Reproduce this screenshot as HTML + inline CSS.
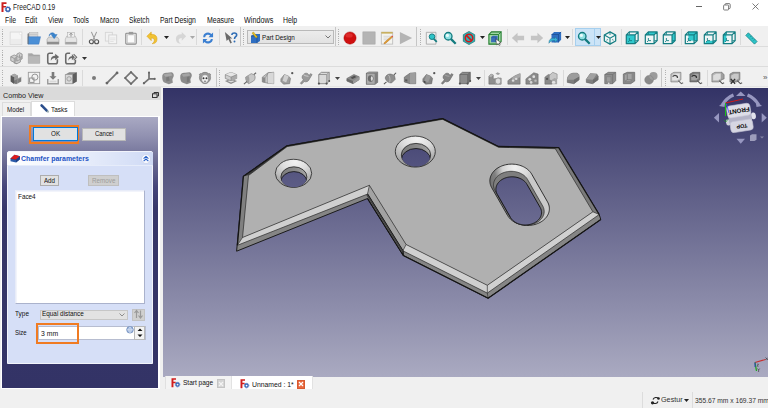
<!DOCTYPE html><html><head><meta charset="utf-8"><title>FreeCAD</title><style>
*{margin:0;padding:0;box-sizing:border-box}
html,body{width:768px;height:408px;overflow:hidden;background:#f0f0f0;font-family:"Liberation Sans",sans-serif;color:#000;position:relative}
.a{position:absolute}
.t{position:absolute;white-space:nowrap;transform-origin:0 0}
svg{overflow:visible}
</style></head><body>
<div class="a" style="left:0px;top:0px;width:768px;height:26px;background:#fff"></div>
<svg class="a" style="left:1px;top:2px" width="10" height="10" viewBox="0 0 10 10"><path d="M0.5 0.3h5v1.6h-3v2h2.6v1.6h-2.6v4.5h-2z" fill="#cc1f1f"/><circle cx="6.9" cy="7.3" r="1.9" fill="none" stroke="#3a62b0" stroke-width="1.4"/><circle cx="6.9" cy="7.3" r="2.7" fill="none" stroke="#3a62b0" stroke-width="0.9" stroke-dasharray="0.9 0.8"/></svg>
<div class="t" style="left:13.00px;top:2.64px;font-size:8.70px;line-height:8.70px;color:#222;font-weight:normal;transform:scaleX(0.759);">FreeCAD 0.19</div>
<div class="a" style="left:695.8px;top:5.8px;width:6.2px;height:0.9px;background:#666"></div>
<svg class="a" style="left:722.5px;top:3px" width="8" height="7.5" viewBox="0 0 8 7.5"><rect x="0.6" y="2" width="5" height="5" rx="0.8" fill="none" stroke="#666" stroke-width="0.85"/><path d="M2 2V1.6Q2 0.6 3 0.6H6.2Q7.2 0.6 7.2 1.6V4.8Q7.2 5.6 6.2 5.6H5.6" fill="none" stroke="#666" stroke-width="0.85"/></svg>
<svg class="a" style="left:751.5px;top:3px" width="7" height="7" viewBox="0 0 7 7"><path d="M0.5 0.5L6.5 6.5M6.5 0.5L0.5 6.5" stroke="#666" stroke-width="0.85"/></svg>
<div class="t" style="left:4.60px;top:15.88px;font-size:8.41px;line-height:8.41px;color:#111;font-weight:normal;transform:scaleX(0.813);">File</div>
<div class="t" style="left:25.40px;top:15.88px;font-size:8.41px;line-height:8.41px;color:#111;font-weight:normal;transform:scaleX(0.834);">Edit</div>
<div class="t" style="left:47.80px;top:15.88px;font-size:8.41px;line-height:8.41px;color:#111;font-weight:normal;transform:scaleX(0.841);">View</div>
<div class="t" style="left:73.20px;top:15.88px;font-size:8.41px;line-height:8.41px;color:#111;font-weight:normal;transform:scaleX(0.805);">Tools</div>
<div class="t" style="left:99.80px;top:15.88px;font-size:8.41px;line-height:8.41px;color:#111;font-weight:normal;transform:scaleX(0.813);">Macro</div>
<div class="t" style="left:129.40px;top:15.88px;font-size:8.41px;line-height:8.41px;color:#111;font-weight:normal;transform:scaleX(0.791);">Sketch</div>
<div class="t" style="left:160.10px;top:15.88px;font-size:8.41px;line-height:8.41px;color:#111;font-weight:normal;transform:scaleX(0.817);">Part Design</div>
<div class="t" style="left:206.60px;top:15.88px;font-size:8.41px;line-height:8.41px;color:#111;font-weight:normal;transform:scaleX(0.830);">Measure</div>
<div class="t" style="left:243.75px;top:15.88px;font-size:8.41px;line-height:8.41px;color:#111;font-weight:normal;transform:scaleX(0.858);">Windows</div>
<div class="t" style="left:282.80px;top:15.88px;font-size:8.41px;line-height:8.41px;color:#111;font-weight:normal;transform:scaleX(0.816);">Help</div>
<div class="a" style="left:0px;top:26px;width:768px;height:61px;background:#f0f0f0"></div>
<div class="a" style="left:0px;top:46px;width:768px;height:1px;background:#dcdcdc"></div>
<div class="a" style="left:0px;top:66px;width:768px;height:1px;background:#dcdcdc"></div>
<div class="a" style="left:0px;top:86px;width:768px;height:1px;background:#e4e4e4"></div>
<div class="a" style="left:2.3px;top:29px;width:1.2px;height:16px;background:repeating-linear-gradient(to bottom,#b2b2b2 0 1.1px,transparent 1.1px 2.2px)"></div>
<svg class="a" style="left:8.5px;top:30.5px" width="14" height="14" viewBox="0 0 16 16"><rect x="1.3" y="1.2" width="13.4" height="14.3" fill="#f5f5f5" stroke="#d2d2d2" stroke-width="0.8"/><rect x="2" y="9" width="12" height="6" fill="#ececec"/><circle cx="13.2" cy="2.8" r="1.4" fill="#fff" stroke="#d8d8d8" stroke-width="0.6"/></svg>
<svg class="a" style="left:27px;top:30.5px" width="14" height="14" viewBox="0 0 16 16"><path d="M1.2 2.5H6L7 3.5H12V8H1.2Z" fill="#9a9a9a"/><rect x="2.5" y="1.5" width="10" height="6" fill="#dedede" stroke="#aaa" stroke-width="0.5"/><rect x="3" y="3" width="9" height="2" fill="#c8c8c8"/><path d="M1.2 6.5H15.5L13.5 15H1.2Z" fill="#4b8fd6" stroke="#3a74b8" stroke-width="0.5"/><path d="M1.2 3V15" stroke="#666" stroke-width="1"/></svg>
<svg class="a" style="left:45.5px;top:30.5px" width="14" height="14" viewBox="0 0 16 16"><path d="M1.2 9.5L3 7H13L14.8 9.5V15H1.2Z" fill="#dadada" stroke="#a0a0a0" stroke-width="0.7"/><rect x="1.2" y="12.3" width="13.6" height="2.7" fill="#8e8e8e"/><path d="M3.5 6C3.5 1.5 8.5 0.5 10.5 4H12.8L9.3 8.8L5.8 4H8.3C7.2 2.8 5 3 3.5 6Z" fill="#3a86d0" stroke="#2a68aa" stroke-width="0.4"/></svg>
<svg class="a" style="left:64px;top:30.5px" width="14" height="14" viewBox="0 0 16 16"><path d="M1.5 9.5L3 6H13L14.5 9.5V15H1.5Z" fill="#e6e6e6" stroke="#a8a8a8" stroke-width="0.7"/><rect x="1.5" y="12.5" width="13" height="2.5" fill="#a4a4a4"/><rect x="4" y="1.5" width="8" height="5.5" fill="#efefef" stroke="#aaa" stroke-width="0.6"/><path d="M8 2.5V6.5M6.3 4.3L8 2.5L9.7 4.3" fill="none" stroke="#888" stroke-width="1"/></svg>
<svg class="a" style="left:86.5px;top:30.5px" width="14" height="14" viewBox="0 0 16 16"><path d="M5 1L9 10M11 1L7 10" stroke="#9a9a9a" stroke-width="1.2"/><circle cx="5" cy="12.3" r="2.3" fill="none" stroke="#555" stroke-width="1.3"/><circle cx="11" cy="12.3" r="2.3" fill="none" stroke="#555" stroke-width="1.3"/></svg>
<svg class="a" style="left:104px;top:30.5px" width="14" height="14" viewBox="0 0 16 16"><rect x="1.5" y="1.5" width="8" height="10" fill="#f2f2f2" stroke="#d4d4d4"/><rect x="5.5" y="4.5" width="9" height="10" fill="#f4f4f4" stroke="#d0d0d0"/><path d="M7 8H13M7 10H13M7 12H11" stroke="#dadada" stroke-width="0.8"/></svg>
<svg class="a" style="left:123.5px;top:30.5px" width="14" height="14" viewBox="0 0 16 16"><rect x="2" y="2.5" width="12" height="12.5" rx="1" fill="#e8e8e8" stroke="#8c8c8c" stroke-width="1.2"/><rect x="4" y="4.5" width="8" height="9" fill="#fafafa" stroke="#bbb" stroke-width="0.6"/><rect x="5.5" y="1" width="5" height="3" fill="#9a9a9a"/></svg>
<svg class="a" style="left:145.5px;top:30.5px" width="14" height="14" viewBox="0 0 16 16"><path d="M5 4C11 3 14 7 12 12C11 14 9 14.5 7 14.5C10 13 11 8 6 8V11L1 6L6 1V4Z" fill="#f1c232" stroke="#d9a21b" stroke-width="0.6"/></svg>
<svg class="a" style="left:172.5px;top:30.5px" width="14" height="14" viewBox="0 0 16 16"><path d="M11 4C5 3 2 7 4 12C5 14 7 14.5 9 14.5C6 13 5 8 10 8V11L15 6L10 1V4Z" fill="#d6d6d6"/></svg>
<svg class="a" style="left:200.5px;top:30.5px" width="14" height="14" viewBox="0 0 16 16"><path d="M2.5 7A5.5 5.5 0 0 1 12 3.5L13.8 1.8V7H8.6L10.4 5.2A3.4 3.4 0 0 0 4.7 7Z" fill="#3b7fd1"/><path d="M13.5 9A5.5 5.5 0 0 1 4 12.5L2.2 14.2V9H7.4L5.6 10.8A3.4 3.4 0 0 0 11.3 9Z" fill="#3b7fd1"/></svg>
<svg class="a" style="left:223.5px;top:30.5px" width="14" height="14" viewBox="0 0 16 16"><path d="M1 1L9.5 8.5H6.8L9 13.5L7.3 14.4L5 9.5L3 11.5Z" fill="#6a6a6a"/><path d="M9 4.5C9 1.5 14.5 1.5 14.5 4.5C14.5 6.5 12 6.5 12 9" fill="none" stroke="#2f6db5" stroke-width="1.8"/><circle cx="12" cy="12" r="1.1" fill="#2f6db5"/></svg>
<div class="a" style="left:81.5px;top:29px;width:1px;height:16px;background:#dadada"></div>
<div class="a" style="left:141px;top:29px;width:1px;height:16px;background:#dadada"></div>
<div class="a" style="left:196px;top:29px;width:1px;height:16px;background:#dadada"></div>
<div class="a" style="left:218.5px;top:29px;width:1px;height:16px;background:#dadada"></div>
<svg class="a" style="left:164px;top:36px" width="5" height="3" viewBox="0 0 5 3"><path d="M0 0H5L2.5 3Z" fill="#222"/></svg>
<svg class="a" style="left:190px;top:36px" width="5" height="3" viewBox="0 0 5 3"><path d="M0 0H5L2.5 3Z" fill="#a8a8a8"/></svg>
<div class="a" style="left:240px;top:27px;width:1px;height:19px;background:#c6c6c6"></div>
<div class="a" style="left:243.3px;top:29px;width:1.2px;height:16px;background:repeating-linear-gradient(to bottom,#b2b2b2 0 1.1px,transparent 1.1px 2.2px)"></div>
<div class="a" style="left:247px;top:30px;width:87px;height:13.5px;background:linear-gradient(#ececec,#e2e2e2);border:1px solid #b9b9b9"></div>
<svg class="a" style="left:250px;top:31.5px" width="11" height="11" viewBox="0 0 11 11"><path d="M1 4L4 2H10V9L7 11H1Z" fill="#2f6fc2"/><path d="M1 4H7V11" fill="none" stroke="#1b4c8c" stroke-width="0.7"/><path d="M2 1L6 6L7.5 5L3.5 0Z" fill="#e8c020" stroke="#a08010" stroke-width="0.4"/></svg>
<div class="t" style="left:262.10px;top:33.66px;font-size:7.25px;line-height:7.25px;color:#111;font-weight:normal;transform:scaleX(0.866);">Part Design</div>
<svg class="a" style="left:325px;top:35px" width="6" height="4" viewBox="0 0 6 4"><path d="M0.5 0.5L3 3L5.5 0.5" fill="none" stroke="#555" stroke-width="0.8"/></svg>
<div class="a" style="left:334.5px;top:27px;width:1px;height:19px;background:#c6c6c6"></div>
<div class="a" style="left:337.8px;top:29px;width:1.2px;height:16px;background:repeating-linear-gradient(to bottom,#b2b2b2 0 1.1px,transparent 1.1px 2.2px)"></div>
<svg class="a" style="left:342.5px;top:30.5px" width="14" height="14" viewBox="0 0 16 16"><circle cx="8" cy="8" r="7" fill="#cf1010" stroke="#a00" stroke-width="0.5"/><ellipse cx="7" cy="5" rx="4" ry="2.5" fill="#e84040" opacity="0.6"/></svg>
<svg class="a" style="left:362px;top:30.5px" width="14" height="14" viewBox="0 0 16 16"><rect x="1" y="1" width="14" height="14" fill="#b4b4b4" stroke="#a0a0a0" stroke-width="0.6"/></svg>
<svg class="a" style="left:380px;top:30.5px" width="14" height="14" viewBox="0 0 16 16"><rect x="1.5" y="1.5" width="13" height="13.5" fill="#f4f4f0" stroke="#bdbdbd"/><rect x="1.5" y="1" width="13" height="2" fill="#c8b060"/><path d="M4 6H12M4 8H10M4 10H9" stroke="#ccc" stroke-width="0.8"/><path d="M5 13L13 6L14.2 7.2L6.2 14.2L4.5 14.5Z" fill="#e0a030" stroke="#b06010" stroke-width="0.5"/><path d="M13 6L14.2 7.2L15 6.4L13.8 5.2Z" fill="#e04040"/></svg>
<svg class="a" style="left:398.8px;top:30.5px" width="14" height="14" viewBox="0 0 16 16"><path d="M1 1L15 8L1 15Z" fill="#b4b4b4"/></svg>
<div class="a" style="left:416px;top:27px;width:1px;height:19px;background:#c6c6c6"></div>
<div class="a" style="left:419.8px;top:29px;width:1.2px;height:16px;background:repeating-linear-gradient(to bottom,#b2b2b2 0 1.1px,transparent 1.1px 2.2px)"></div>
<svg class="a" style="left:424.5px;top:30.5px" width="14" height="14" viewBox="0 0 16 16"><path d="M1.5 1.5H12.5V15H1.5Z" fill="#f2f2f2" stroke="#a8a8a8"/><circle cx="8" cy="6.5" r="3.2" fill="#2ec4c8" stroke="#137b7f" stroke-width="1.1"/><path d="M10 9L13.5 12.5" stroke="#137b7f" stroke-width="2"/></svg>
<svg class="a" style="left:443px;top:30.5px" width="14" height="14" viewBox="0 0 16 16"><circle cx="6" cy="6" r="4.3" fill="#8fe0e2" stroke="#137b7f" stroke-width="1.5"/><circle cx="5" cy="5" r="1.8" fill="#e6fbfb"/><path d="M9 9L14.5 14.5" stroke="#137b7f" stroke-width="2.6"/></svg>
<svg class="a" style="left:462px;top:30.5px" width="14" height="14" viewBox="0 0 16 16"><path d="M8 0.5L14.5 4.2V11.8L8 15.5L1.5 11.8V4.2Z" fill="#2ab5b8" stroke="#156e70" stroke-width="0.8"/><circle cx="8" cy="8" r="4.3" fill="none" stroke="#d01818" stroke-width="1.8"/><path d="M5 5L11 11" stroke="#d01818" stroke-width="1.8"/></svg>
<svg class="a" style="left:488px;top:30.5px" width="14" height="14" viewBox="0 0 16 16"><path d="M1 4L4 1H15V12L12 15H1Z" fill="#9fd6a4" stroke="#1f7a2a" stroke-width="1.2"/><path d="M1 4H12V15M12 4L15 1" fill="none" stroke="#1f7a2a" stroke-width="1"/><path d="M3.5 7L5.5 5.5H11V11L9 12.8H3.5Z" fill="#3a6fb8"/><path d="M3.5 7H9V12.8" fill="none" stroke="#274f8a" stroke-width="0.6"/><path d="M9 9L15 13.5L12.5 13.8L14 16L12.8 16.5L11.5 14.3L9.8 15.8Z" fill="#fff" stroke="#333" stroke-width="0.6"/></svg>
<svg class="a" style="left:510.5px;top:30.5px" width="14" height="14" viewBox="0 0 16 16"><path d="M1 8L7.5 2V5.5H15V10.5H7.5V14Z" fill="#c4c4c4"/></svg>
<svg class="a" style="left:529.5px;top:30.5px" width="14" height="14" viewBox="0 0 16 16"><path d="M15 8L8.5 2V5.5H1V10.5H8.5V14Z" fill="#c4c4c4"/></svg>
<svg class="a" style="left:547.5px;top:30.5px" width="14" height="14" viewBox="0 0 16 16"><path d="M4 4L7 1H15V10L12 13H4Z" fill="#2f6fc2"/><path d="M4 4H12V13M12 4L15 1" fill="none" stroke="#1b4c8c" stroke-width="0.8"/><path d="M1 14C1 9 4 7.5 8 8.5V6.5L11 10L8 13V11C5 10.5 3 11.5 1 14Z" fill="#3bb3d6" stroke="#1d6d8a" stroke-width="0.5"/></svg>
<svg class="a" style="left:480px;top:36px" width="5" height="3" viewBox="0 0 5 3"><path d="M0 0H5L2.5 3Z" fill="#222"/></svg>
<svg class="a" style="left:565px;top:36px" width="5" height="3" viewBox="0 0 5 3"><path d="M0 0H5L2.5 3Z" fill="#222"/></svg>
<div class="a" style="left:506.5px;top:29px;width:1px;height:16px;background:#dadada"></div>
<div class="a" style="left:572px;top:29px;width:1px;height:16px;background:#dadada"></div>
<div class="a" style="left:574.5px;top:28px;width:26.5px;height:18px;background:#cce4f7;border:1px solid #a6cfee"></div>
<div class="a" style="left:593.5px;top:28px;width:1px;height:18px;background:#a6cfee"></div>
<svg class="a" style="left:577px;top:30.5px" width="14" height="14" viewBox="0 0 16 16"><circle cx="6" cy="6" r="4.3" fill="#8fe0e2" stroke="#137b7f" stroke-width="1.5"/><circle cx="5" cy="5" r="1.8" fill="#e6fbfb"/><path d="M9 9L14.5 14.5" stroke="#137b7f" stroke-width="2.6"/></svg>
<svg class="a" style="left:595.5px;top:36px" width="5" height="3" viewBox="0 0 5 3"><path d="M0 0H5L2.5 3Z" fill="#222"/></svg>
<svg class="a" style="left:602.5px;top:30.5px" width="14" height="14" viewBox="0 0 16 16"><path d="M8 1L14.5 4.6V11.4L8 15L1.5 11.4V4.6Z" fill="#eef9fa" fill-opacity="0.5" stroke="#147d82" stroke-width="1.4" stroke-linejoin="round"/><path d="M1.5 4.6L8 8.2L14.5 4.6M8 8.2V15" fill="none" stroke="#147d82" stroke-width="1.2"/><path d="M8 1V4.5M4 10.5L5.5 9.8M12 10.5L10.5 9.8" stroke="#147d82" stroke-width="1"/></svg>
<div class="a" style="left:621px;top:29px;width:1px;height:16px;background:#dadada"></div>
<svg class="a" style="left:624.5px;top:30.5px" width="14" height="14" viewBox="0 0 16 16"><path d="M1.5 4.5L5 1H15V11L11.5 14.5H1.5Z" fill="#eef9fa" fill-opacity="0.5"/><path d="M1.5 4.5H11.5V14.5H1.5Z" fill="#30c9cd"/><path d="M5 1V4M5 11H8M5 11L3.5 12.5M5 11V8M15 11H12" stroke="#147d82" stroke-width="1" fill="none"/><path d="M1.5 4.5L5 1H15V11L11.5 14.5H1.5Z M1.5 4.5H11.5V14.5M11.5 4.5L15 1" fill="none" stroke="#147d82" stroke-width="1.4" stroke-linejoin="round"/></svg>
<svg class="a" style="left:643.5px;top:30.5px" width="14" height="14" viewBox="0 0 16 16"><path d="M1.5 4.5L5 1H15V11L11.5 14.5H1.5Z" fill="#eef9fa" fill-opacity="0.5"/><path d="M1.5 4.5L5 1H15L11.5 4.5Z" fill="#30c9cd"/><path d="M5 1V4M5 11H8M5 11L3.5 12.5M5 11V8M15 11H12" stroke="#147d82" stroke-width="1" fill="none"/><path d="M1.5 4.5L5 1H15V11L11.5 14.5H1.5Z M1.5 4.5H11.5V14.5M11.5 4.5L15 1" fill="none" stroke="#147d82" stroke-width="1.4" stroke-linejoin="round"/></svg>
<svg class="a" style="left:662px;top:30.5px" width="14" height="14" viewBox="0 0 16 16"><path d="M1.5 4.5L5 1H15V11L11.5 14.5H1.5Z" fill="#eef9fa" fill-opacity="0.5"/><path d="M11.5 4.5L15 1V11L11.5 14.5Z" fill="#30c9cd"/><path d="M5 1V4M5 11H8M5 11L3.5 12.5M5 11V8M15 11H12" stroke="#147d82" stroke-width="1" fill="none"/><path d="M1.5 4.5L5 1H15V11L11.5 14.5H1.5Z M1.5 4.5H11.5V14.5M11.5 4.5L15 1" fill="none" stroke="#147d82" stroke-width="1.4" stroke-linejoin="round"/></svg>
<svg class="a" style="left:683.5px;top:30.5px" width="14" height="14" viewBox="0 0 16 16"><path d="M1.5 4.5L5 1H15V11L11.5 14.5H1.5Z" fill="#eef9fa" fill-opacity="0.5"/><path d="M5 1H15V11H5Z" fill="#30c9cd"/><path d="M5 1V4M5 11H8M5 11L3.5 12.5M5 11V8M15 11H12" stroke="#147d82" stroke-width="1" fill="none"/><path d="M1.5 4.5L5 1H15V11L11.5 14.5H1.5Z M1.5 4.5H11.5V14.5M11.5 4.5L15 1" fill="none" stroke="#147d82" stroke-width="1.4" stroke-linejoin="round"/></svg>
<svg class="a" style="left:702.5px;top:30.5px" width="14" height="14" viewBox="0 0 16 16"><path d="M1.5 4.5L5 1H15V11L11.5 14.5H1.5Z" fill="#eef9fa" fill-opacity="0.5"/><path d="M1.5 14.5L5 11H15L11.5 14.5Z" fill="#30c9cd"/><path d="M5 1V4M5 11H8M5 11L3.5 12.5M5 11V8M15 11H12" stroke="#147d82" stroke-width="1" fill="none"/><path d="M1.5 4.5L5 1H15V11L11.5 14.5H1.5Z M1.5 4.5H11.5V14.5M11.5 4.5L15 1" fill="none" stroke="#147d82" stroke-width="1.4" stroke-linejoin="round"/></svg>
<svg class="a" style="left:721.5px;top:30.5px" width="14" height="14" viewBox="0 0 16 16"><path d="M1.5 4.5L5 1H15V11L11.5 14.5H1.5Z" fill="#eef9fa" fill-opacity="0.5"/><path d="M1.5 4.5L5 1V11L1.5 14.5Z" fill="#30c9cd"/><path d="M5 1V4M5 11H8M5 11L3.5 12.5M5 11V8M15 11H12" stroke="#147d82" stroke-width="1" fill="none"/><path d="M1.5 4.5L5 1H15V11L11.5 14.5H1.5Z M1.5 4.5H11.5V14.5M11.5 4.5L15 1" fill="none" stroke="#147d82" stroke-width="1.4" stroke-linejoin="round"/></svg>
<div class="a" style="left:681px;top:29px;width:1px;height:16px;background:#dadada"></div>
<div class="a" style="left:740px;top:29px;width:1px;height:16px;background:#dadada"></div>
<svg class="a" style="left:743.5px;top:30.5px" width="14" height="14" viewBox="0 0 16 16"><path d="M2 5L5 2L15 12L12 15Z" fill="#2ec4c8" stroke="#167d80" stroke-width="0.8"/><path d="M5 5L6 4M7 7L8.5 5.5M9 9L10 8M11 11L12.5 9.5" stroke="#167d80" stroke-width="0.8"/></svg>
<div class="a" style="left:2.3px;top:49.5px;width:1.2px;height:16px;background:repeating-linear-gradient(to bottom,#b2b2b2 0 1.1px,transparent 1.1px 2.2px)"></div>
<svg class="a" style="left:8.5px;top:50.5px" width="14" height="14" viewBox="0 0 16 16"><path d="M2 6.5L6 4.5L9 6V3.5L12 2L15 3.5V9L13 10V12.5L9 14.5L2 11Z" fill="#d0d0d0" stroke="#8a8a8a" stroke-width="0.9" stroke-linejoin="round"/><path d="M2 6.5L6 8.5V14L9 14.5M6 8.5L9 7V11.5L13 9.5M9 6L12 7.5L15 6M12 4V7.5" fill="none" stroke="#8a8a8a" stroke-width="0.8"/><path d="M6 8.5L9 7V11.5L6 13Z" fill="#a4a4a4"/><path d="M12 7.5L15 6V9L12 10.5Z" fill="#a4a4a4"/></svg>
<svg class="a" style="left:27px;top:50.5px" width="14" height="14" viewBox="0 0 16 16"><path d="M1.5 3H6L7.5 4.5H14.5V14H1.5Z" fill="#a8a8a8" stroke="#9a9a9a" stroke-width="0.6"/><path d="M1.5 6H14.5V14H1.5Z" fill="#b8b8b8"/></svg>
<svg class="a" style="left:45.5px;top:50.5px" width="14" height="14" viewBox="0 0 16 16"><path d="M8 2.5H4A2 2 0 0 0 2 4.5V12.5A2 2 0 0 0 4 14.5H11A2 2 0 0 0 13 12.5V9.5" fill="none" stroke="#6a6a6a" stroke-width="1.8"/><path d="M5.5 11C5.5 6.5 8 5.5 10.5 5.5V3L15 6.8L10.5 10.5V8C8.5 8 6.8 8.8 5.5 11Z" fill="#6a6a6a"/></svg>
<svg class="a" style="left:64px;top:50.5px" width="14" height="14" viewBox="0 0 16 16"><path d="M7 2.5H4A2 2 0 0 0 2 4.5V12.5A2 2 0 0 0 4 14.5H11A2 2 0 0 0 13 12.5V10" fill="none" stroke="#6a6a6a" stroke-width="1.8"/><path d="M5 11C5 7 7 6 9 6V3.5L12.5 7L9 10.5V8C7.5 8 6 9 5 11Z" fill="#6a6a6a"/><path d="M11 3.5L14.5 7L11 10.5" fill="none" stroke="#6a6a6a" stroke-width="1.2"/></svg>
<svg class="a" style="left:82px;top:56.5px" width="5" height="3" viewBox="0 0 5 3"><path d="M0 0H5L2.5 3Z" fill="#333"/></svg>
<div class="a" style="left:2.3px;top:69.5px;width:1.2px;height:16px;background:repeating-linear-gradient(to bottom,#b2b2b2 0 1.1px,transparent 1.1px 2.2px)"></div>
<svg class="a" style="left:8.5px;top:70.5px" width="14" height="14" viewBox="0 0 16 16"><path d="M2 5L6 3L10 5V8.5L14 7V12L8 15L2 12Z" fill="#7c7c7c"/><path d="M2 5L6 7V15L2 12Z" fill="#5a5a5a"/><path d="M6 7L10 5V8.5L6 10.5Z" fill="#9a9a9a"/><path d="M6 10.5L10 8.5L14 7L10 9.5V15" fill="none" stroke="#a8a8a8" stroke-width="0.6"/><path d="M2 5L6 3L10 5L6 7Z" fill="#a8a8a8"/></svg>
<svg class="a" style="left:27px;top:70.5px" width="14" height="14" viewBox="0 0 16 16"><rect x="1.5" y="1.5" width="13" height="13" fill="#f2f2f2" stroke="#9a9a9a"/><circle cx="9" cy="7" r="3.5" fill="none" stroke="#888" stroke-width="1"/><rect x="3" y="8" width="5" height="5" fill="none" stroke="#888" stroke-width="1"/></svg>
<svg class="a" style="left:45.5px;top:70.5px" width="14" height="14" viewBox="0 0 16 16"><path d="M2 9V14.5H14V9" fill="none" stroke="#9a9a9a" stroke-width="1.6"/><rect x="4" y="11" width="8" height="2" fill="#d8d8d8"/><path d="M6.5 1H9.5V6H12L8 10L4 6H6.5Z" fill="#7a7a7a"/></svg>
<svg class="a" style="left:64px;top:70.5px" width="14" height="14" viewBox="0 0 16 16"><path d="M1.5 4L6 1.5H14.5V12L10 14.5H1.5Z" fill="#8a8a8a"/><path d="M1.5 4H10V14.5H1.5Z" fill="#d8d8d8" stroke="#888" stroke-width="0.6"/><circle cx="5.8" cy="9" r="2.5" fill="none" stroke="#999" stroke-width="1"/><path d="M10 4L14.5 1.5V12L10 14.5Z" fill="#5e5e5e"/></svg>
<svg class="a" style="left:86.5px;top:70.5px" width="14" height="14" viewBox="0 0 16 16"><circle cx="8" cy="8" r="2.3" fill="#7a7a7a"/></svg>
<svg class="a" style="left:104.5px;top:70.5px" width="14" height="14" viewBox="0 0 16 16"><path d="M2.2 13.8L13.8 2.2" stroke="#747474" stroke-width="2"/><circle cx="2.2" cy="13.8" r="1.6" fill="#666"/><circle cx="13.8" cy="2.2" r="1.6" fill="#666"/></svg>
<svg class="a" style="left:123.5px;top:70.5px" width="14" height="14" viewBox="0 0 16 16"><path d="M8 1.2L14.8 8L8 14.8L1.2 8Z" fill="none" stroke="#747474" stroke-width="2" stroke-linejoin="round"/><circle cx="8" cy="1.5" r="1.2" fill="#666"/><circle cx="14.5" cy="8" r="1.2" fill="#666"/><circle cx="8" cy="14.5" r="1.2" fill="#666"/><circle cx="1.5" cy="8" r="1.2" fill="#666"/></svg>
<svg class="a" style="left:141.5px;top:70.5px" width="14" height="14" viewBox="0 0 16 16"><path d="M8 1.5V9L2 14.2M8 9H14.8" fill="none" stroke="#747474" stroke-width="2"/><circle cx="8" cy="1.8" r="1.2" fill="#666"/><circle cx="2.2" cy="14" r="1.3" fill="#666"/><circle cx="14.5" cy="9" r="1.2" fill="#666"/></svg>
<svg class="a" style="left:160.5px;top:70.5px" width="14" height="14" viewBox="0 0 16 16"><path d="M1.5 5C2 3 4 1.5 7 2L12 1.5C14 2 15 4 14.5 6L13 9.5L13.5 13.5L9 15L4.5 13.5C2 12.5 1 9 1.5 5Z" fill="#8e8e8e"/><path d="M3 4L7 3L11.5 2.5L13 5L9 6L5 6.5Z" fill="#a8a8a8"/><path d="M6 7L9 6.5L10 11L6 12Z" fill="#7a7a7a"/></svg>
<svg class="a" style="left:178.5px;top:70.5px" width="14" height="14" viewBox="0 0 16 16"><path d="M1.5 5C2 3 4 1.5 7 2L12 1.5C14 2 15 4 14.5 6L13 9.5L13.5 13.5L9 15L4.5 13.5C2 12.5 1 9 1.5 5Z" fill="#8a8a8a"/><path d="M3 4L7 3L11.5 2.5L13 5L9 6L5 6.5Z" fill="#a4a4a4"/><path d="M9 7L12 6V12L9 13Z" fill="#777"/></svg>
<svg class="a" style="left:198px;top:70.5px" width="14" height="14" viewBox="0 0 16 16"><path d="M2 5C1 4 2 2.5 4 3C6 1 10 1 12 3C14 2.5 15 4 14 5.5C15 8 14 11 12 12.5C10.5 15 5.5 15 4 12.5C2 11 1 8 2 5Z" fill="#9a9a9a" stroke="#666" stroke-width="0.6"/><ellipse cx="8" cy="9" rx="3.8" ry="4.6" fill="#f2f2f2" stroke="#777" stroke-width="0.5"/><circle cx="6.3" cy="8.2" r="1.1" fill="#333"/><circle cx="9.7" cy="8.2" r="1.1" fill="#333"/><ellipse cx="8" cy="11.8" rx="1.5" ry="0.9" fill="#888"/></svg>
<div class="a" style="left:81.5px;top:69.5px;width:1px;height:16px;background:#dadada"></div>
<div class="a" style="left:215.5px;top:67.5px;width:1px;height:19px;background:#c6c6c6"></div>
<div class="a" style="left:218.8px;top:69.5px;width:1.2px;height:16px;background:repeating-linear-gradient(to bottom,#b2b2b2 0 1.1px,transparent 1.1px 2.2px)"></div>
<svg class="a" style="left:224px;top:70.5px" width="14" height="14" viewBox="0 0 16 16"><path d="M1 11.5L8 8.8L15 11.5L8 14.8Z" fill="#8c8c8c"/><path d="M4 11.5L8 10L12 11.5L8 13.2Z" fill="#e4e4e4"/><path d="M1.5 4.2L8 1.5L14.5 4.2V8.5L8 11.2L1.5 8.5Z" fill="#cfcfcf" stroke="#777" stroke-width="0.7"/><path d="M1.5 4.2L8 6.9L14.5 4.2L8 1.5Z" fill="#e6e6e6"/><path d="M8 6.9V11.2L14.5 8.5V4.2Z" fill="#ababab"/><path d="M1.5 4.2L8 6.9L14.5 4.2M8 6.9V11.2" fill="none" stroke="#777" stroke-width="0.6"/></svg>
<svg class="a" style="left:242.5px;top:70.5px" width="14" height="14" viewBox="0 0 16 16"><path d="M3 7L9.5 3L13 4.5C14.5 6.5 14 10 12 11.5L6.5 14.5C4.5 13.5 3 10.5 3 7Z" fill="#c8c8c8" stroke="#777" stroke-width="0.7"/><path d="M3 7L6 5.2C7.5 7 7.8 11 6.5 14.5C4.5 13.5 3 10.5 3 7Z" fill="#a0a0a0"/><path d="M1 15L4.5 12M12.5 4L15 2" stroke="#666" stroke-width="1.2"/></svg>
<svg class="a" style="left:261px;top:70.5px" width="14" height="14" viewBox="0 0 16 16"><path d="M1.5 7L8 2L14.5 1.5V14.5L8 14L1.5 12.5Z" fill="#c4c4c4" stroke="#6e6e6e" stroke-width="0.7"/><path d="M1.5 7L5 7.5V13L1.5 12.5Z" fill="#8a8a8a"/><path d="M8 2.5V14M14.5 1.5L8 2.5" fill="none" stroke="#777" stroke-width="0.6"/><path d="M8 2.5L14.5 1.5V14.5L8 14Z" fill="#d8d8d8"/><path d="M5 7.5L8 2.5" stroke="#777" stroke-width="0.6"/></svg>
<svg class="a" style="left:280px;top:70.5px" width="14" height="14" viewBox="0 0 16 16"><path d="M1 9L5 4L10 6L12 8.5L11 14.5L4 15L1 12Z" fill="#9e9e9e" stroke="#6a6a6a" stroke-width="0.6"/><path d="M5 4L10 6L7 13L3 11Z" fill="#d0d0d0"/><circle cx="14" cy="2.5" r="1.3" fill="#555"/></svg>
<svg class="a" style="left:298.5px;top:70.5px" width="14" height="14" viewBox="0 0 16 16"><path d="M5 4C8 1 12 3 11 6L13 3L15 4L12 9C11 12 8 13 6 12L3 15L1.5 14L5 10C3 8 3 6 5 4Z" fill="#9a9a9a" stroke="#6a6a6a" stroke-width="0.6"/><path d="M5 4C7 6 9 6 11 6" fill="none" stroke="#d0d0d0" stroke-width="1.2"/></svg>
<svg class="a" style="left:317px;top:70.5px" width="14" height="14" viewBox="0 0 16 16"><path d="M2 4L5 1.5H14V11.5L11 14.5H2Z" fill="#dadada" stroke="#6a6a6a" stroke-width="0.8"/><path d="M2 4H11V14.5M11 4L14 1.5" fill="none" stroke="#6a6a6a" stroke-width="0.7"/><path d="M11 4L14 1.5V11.5L11 14.5Z" fill="#b4b4b4"/><circle cx="2.2" cy="14.3" r="1.3" fill="#555"/><circle cx="11" cy="14.3" r="1.3" fill="#555"/><circle cx="14" cy="11.5" r="1.1" fill="#555"/></svg>
<svg class="a" style="left:346px;top:70.5px" width="14" height="14" viewBox="0 0 16 16"><path d="M1 8.5L9 4L15 6.5V10L8 14.5L1 11.5Z" fill="#8a8a8a" stroke="#5e5e5e" stroke-width="0.6"/><path d="M1 8.5L8 11.5V14.5L1 11.5Z" fill="#6a6a6a"/><path d="M8 11.5L15 6.5V10L8 14.5Z" fill="#9a9a9a"/><path d="M5 7.8L9.5 5.5L12 6.8L7.5 9.2Z" fill="#505050"/></svg>
<svg class="a" style="left:364.5px;top:70.5px" width="14" height="14" viewBox="0 0 16 16"><path d="M1.5 2.5L4.5 1H14.5V13L11.5 15H1.5Z" fill="#9c9c9c" stroke="#666" stroke-width="0.6"/><rect x="1.5" y="2.5" width="10" height="12.5" fill="#aaaaaa" stroke="#666" stroke-width="0.6"/><ellipse cx="6.5" cy="8.7" rx="3.2" ry="3.8" fill="#6a6a6a"/><ellipse cx="7.8" cy="8.7" rx="1.2" ry="2.6" fill="#e0e0e0"/><path d="M11.5 2.5L14.5 1V13L11.5 15Z" fill="#7e7e7e"/></svg>
<svg class="a" style="left:383px;top:70.5px" width="14" height="14" viewBox="0 0 16 16"><path d="M2.5 8C3 5 6 3 9 3.5L13 5L14 9.5L10 13.5C7 14 3.5 12 2.5 8Z" fill="#8e8e8e" stroke="#5e5e5e" stroke-width="0.6"/><path d="M6 4.5C8 6 8.5 10 7.5 13" fill="none" stroke="#bdbdbd" stroke-width="1"/><path d="M1 15L4 12.5M12.5 4.5L15 2" stroke="#555" stroke-width="1.2"/></svg>
<svg class="a" style="left:403px;top:70.5px" width="14" height="14" viewBox="0 0 16 16"><path d="M1.5 7L8 2.5L14.5 2V14.5L8 14.5L1.5 12.5Z" fill="#8a8a8a" stroke="#5a5a5a" stroke-width="0.7"/><path d="M8 2.5L14.5 2V14.5L8 14.5Z" fill="#9e9e9e"/><path d="M2.5 9.5L5 9.8V12L2.5 11.7Z" fill="#555"/></svg>
<svg class="a" style="left:421.5px;top:70.5px" width="14" height="14" viewBox="0 0 16 16"><path d="M1 9L5 4L10 6L12 8.5L11 14.5L4 15L1 12Z" fill="#858585" stroke="#5a5a5a" stroke-width="0.6"/><path d="M5 4L10 6L7 13L3 11Z" fill="#9a9a9a"/><path d="M2 11L4 12V14L2 13Z" fill="#444"/><circle cx="14" cy="2.5" r="1.3" fill="#555"/></svg>
<svg class="a" style="left:440px;top:70.5px" width="14" height="14" viewBox="0 0 16 16"><path d="M5 4C8 1 12 3 11 6L13 3L15 4L12 9C11 12 8 13 6 12L3 15L1.5 14L5 10C3 8 3 6 5 4Z" fill="#858585" stroke="#5a5a5a" stroke-width="0.6"/><path d="M5 4C7 6 9 6 11 6" fill="none" stroke="#a8a8a8" stroke-width="1.2"/></svg>
<svg class="a" style="left:458px;top:70.5px" width="14" height="14" viewBox="0 0 16 16"><path d="M2 4L5 1.5H14V11.5L11 14.5H2Z" fill="#8c8c8c" stroke="#5a5a5a" stroke-width="0.8"/><path d="M2 4H11V14.5M11 4L14 1.5" fill="none" stroke="#5a5a5a" stroke-width="0.7"/><path d="M11 4L14 1.5V11.5L11 14.5Z" fill="#707070"/><circle cx="2.2" cy="14.3" r="1.3" fill="#555"/><circle cx="11" cy="14.3" r="1.3" fill="#555"/><circle cx="14" cy="11.5" r="1.1" fill="#555"/></svg>
<svg class="a" style="left:488px;top:70.5px" width="14" height="14" viewBox="0 0 16 16"><path d="M1 15V6L3.5 3.5L6 4.5V9L15 8V15Z" fill="#8e8e8e" stroke="#666" stroke-width="0.6"/><path d="M1 6L3.5 3.5L6 4.5L3.5 7Z" fill="#b4b4b4"/><path d="M8 9.5L11.5 7L15 8.5V15H8Z" fill="#9a9a9a"/><ellipse cx="11.5" cy="11.5" rx="2.6" ry="3" fill="#dedede"/><path d="M8.5 3L11 1.5L14 3L11.5 4.5Z" fill="#a0a0a0"/></svg>
<svg class="a" style="left:506.5px;top:70.5px" width="14" height="14" viewBox="0 0 16 16"><path d="M1 15V11L6 7.5L10 5L15 3V15Z" fill="#8e8e8e" stroke="#666" stroke-width="0.6"/><path d="M6 7.5L10 5L15 3V7L10 9L6 11.5Z" fill="#a8a8a8"/><ellipse cx="7" cy="11" rx="1.6" ry="1.3" fill="#dcdcdc"/><ellipse cx="10.5" cy="9" rx="1.5" ry="1.2" fill="#dcdcdc"/></svg>
<svg class="a" style="left:525px;top:70.5px" width="14" height="14" viewBox="0 0 16 16"><path d="M1 15V9L6 5L10 2L15 3.5V15Z" fill="#8a8a8a" stroke="#666" stroke-width="0.6"/><circle cx="5.5" cy="9.5" r="1.6" fill="#e0e0e0"/><circle cx="10" cy="6.5" r="1.6" fill="#e0e0e0"/><circle cx="7" cy="13" r="1.5" fill="#d8d8d8"/><circle cx="12" cy="11" r="1.4" fill="#bbb"/></svg>
<svg class="a" style="left:544px;top:70.5px" width="14" height="14" viewBox="0 0 16 16"><path d="M1 15V7L5 4L9 5V15Z" fill="#8a8a8a" stroke="#666" stroke-width="0.6"/><path d="M6 5L10 1.5L15 3.5V9L11 12L6 10Z" fill="#c8c8c8" stroke="#777" stroke-width="0.6"/><path d="M9 10L12 8L15 9V15H9Z" fill="#a8a8a8"/><ellipse cx="11" cy="13" rx="2" ry="1.6" fill="#e4e4e4"/><circle cx="3.5" cy="9" r="1.3" fill="#555"/></svg>
<svg class="a" style="left:566px;top:70.5px" width="14" height="14" viewBox="0 0 16 16"><path d="M1.5 10C1.5 6 4 3 8 2.5L12.5 2.5C14.5 3 15 4.5 15 6.5V10L9 14.5L1.5 13Z" fill="#7e7e7e" stroke="#5a5a5a" stroke-width="0.6"/><path d="M1.5 10C1.5 6 4 3 8 2.5L12.5 2.5C14.5 3 15 4.5 15 6.5L9 10Z" fill="#9c9c9c"/><path d="M9 10V14.5L15 10V6.5Z" fill="#6e6e6e"/></svg>
<svg class="a" style="left:584.5px;top:70.5px" width="14" height="14" viewBox="0 0 16 16"><path d="M1.5 9.5L6 3L13.5 3.5L15 6V10L8.5 14.5L1.5 13Z" fill="#808080" stroke="#5a5a5a" stroke-width="0.6"/><path d="M1.5 9.5L6 3L13.5 3.5L9 10Z" fill="#a0a0a0"/><path d="M9 10V14.5L15 10V6Z" fill="#6e6e6e"/></svg>
<svg class="a" style="left:603px;top:70.5px" width="14" height="14" viewBox="0 0 16 16"><path d="M2 4L6 1.5H14.5V11L11 14.5H2Z" fill="#8e8e8e" stroke="#5e5e5e" stroke-width="0.7"/><path d="M2 4H11V14.5M11 4L14.5 1.5" fill="none" stroke="#666" stroke-width="0.6"/><path d="M4 6.5H9V12.5H4Z" fill="#9c9c9c" stroke="#777" stroke-width="0.5"/><circle cx="6.5" cy="14.2" r="1" fill="#e0e0e0"/></svg>
<svg class="a" style="left:622px;top:70.5px" width="14" height="14" viewBox="0 0 16 16"><path d="M1.5 3.5L6 1.5H14.5V11.5L10 14.5H1.5Z" fill="#888" stroke="#5e5e5e" stroke-width="0.7"/><path d="M3.5 4.5L6 3.5H11V10L9 11.5H3.5Z" fill="#a4a4a4"/><path d="M6 3.5V10L3.5 11.5M6 10H11" fill="none" stroke="#5e5e5e" stroke-width="0.6"/></svg>
<svg class="a" style="left:644px;top:70.5px" width="14" height="14" viewBox="0 0 16 16"><circle cx="5.8" cy="10" r="5" fill="#8a8a8a"/><circle cx="10.8" cy="5.8" r="4.7" fill="#9c9c9c"/><circle cx="5.8" cy="10" r="5" fill="none" stroke="#777" stroke-width="0.5"/></svg>
<svg class="a" style="left:335px;top:76.5px" width="5" height="3" viewBox="0 0 5 3"><path d="M0 0H5L2.5 3Z" fill="#444"/></svg>
<svg class="a" style="left:476px;top:76.5px" width="5" height="3" viewBox="0 0 5 3"><path d="M0 0H5L2.5 3Z" fill="#444"/></svg>
<div class="a" style="left:484px;top:69.5px;width:1px;height:16px;background:#dadada"></div>
<div class="a" style="left:562.5px;top:69.5px;width:1px;height:16px;background:#dadada"></div>
<div class="a" style="left:639.5px;top:69.5px;width:1px;height:16px;background:#dadada"></div>
<div class="a" style="left:661px;top:67.5px;width:1px;height:19px;background:#c6c6c6"></div>
<div class="a" style="left:664.8px;top:69.5px;width:1.2px;height:16px;background:repeating-linear-gradient(to bottom,#b2b2b2 0 1.1px,transparent 1.1px 2.2px)"></div>
<svg class="a" style="left:670px;top:70.5px" width="14" height="14" viewBox="0 0 16 16"><path d="M1 3.5L4.5 1.5H12.5V10L9 12.5H1Z" fill="#c4c4c4" stroke="#666" stroke-width="0.6"/><path d="M2.5 5L6 3H11V8.5L8 10.5H2.5Z" fill="#e4e4e4"/><path d="M3 6.5C5 4 9 5 8.5 8" fill="none" stroke="#444" stroke-width="1.4"/><path d="M9.5 11L13 14.5L15 13.5" fill="none" stroke="#666" stroke-width="1.2"/></svg>
<svg class="a" style="left:688.5px;top:70.5px" width="14" height="14" viewBox="0 0 16 16"><path d="M1 3.5L4.5 1.5H12.5V10L9 12.5H1Z" fill="#7a7a7a" stroke="#555" stroke-width="0.6"/><path d="M2.5 5L6 3H11V8.5L8 10.5H2.5Z" fill="#a4a4a4"/><path d="M3 6.5C5 4 9 5 8.5 8" fill="none" stroke="#333" stroke-width="1.4"/><path d="M9.5 11L13 14.5L15 13.5" fill="none" stroke="#555" stroke-width="1.2"/></svg>
<svg class="a" style="left:710.5px;top:70.5px" width="14" height="14" viewBox="0 0 16 16"><path d="M1 3.5L4.5 1.5H12.5V10L9 12.5H1Z" fill="#b4b4b4" stroke="#666" stroke-width="0.6"/><path d="M2.5 5L6 3H11V8.5L8 10.5H2.5Z" fill="#dcdcdc"/><path d="M12 1.5L15 4V9L12 10" fill="#a0a0a0" stroke="#666" stroke-width="0.6"/><path d="M9.5 11L13 14.5L15 13.5" fill="none" stroke="#555" stroke-width="1.2"/></svg>
<svg class="a" style="left:729px;top:70.5px" width="14" height="14" viewBox="0 0 16 16"><path d="M1 3.5L4.5 1.5H12.5V10L9 12.5H1Z" fill="#9a9a9a" stroke="#666" stroke-width="0.6"/><path d="M2.5 5L6 3H11V8.5L8 10.5H2.5Z" fill="#c8c8c8"/><path d="M2 9L7 14.5M7 9L2 14.5" stroke="#333" stroke-width="1.6"/><path d="M9.5 11L13 14.5L15 13.5" fill="none" stroke="#555" stroke-width="1.2"/></svg>
<div class="a" style="left:706.5px;top:69.5px;width:1px;height:16px;background:#dadada"></div>
<div class="t" style="left:763px;top:74px;font-size:8px;line-height:8px;color:#555;font-weight:normal;transform:scaleX(1);">»</div>
<div class="a" style="left:0px;top:87px;width:161px;height:12.7px;background:#dadada"></div>
<div class="t" style="left:3.00px;top:91.54px;font-size:7.39px;line-height:7.39px;color:#222;font-weight:normal;transform:scaleX(0.969);">Combo View</div>
<svg class="a" style="left:151.5px;top:91.5px" width="7" height="6" viewBox="0 0 7 6"><rect x="0.5" y="1.8" width="4.5" height="3.7" fill="none" stroke="#333" stroke-width="1"/><path d="M2 1.8V0.5H6.5V4H5" fill="none" stroke="#333" stroke-width="1"/></svg>
<div class="a" style="left:1.5px;top:101.5px;width:29.5px;height:14.5px;background:#f0f0f0;border:1px solid #dcdcdc;border-bottom:none"></div>
<div class="t" style="left:7.10px;top:105.94px;font-size:7.39px;line-height:7.39px;color:#111;font-weight:normal;transform:scaleX(0.854);">Model</div>
<div class="a" style="left:31px;top:100.5px;width:44px;height:16px;background:#fff;border:1px solid #dcdcdc;border-bottom:none"></div>
<svg class="a" style="left:39.5px;top:104px" width="10" height="9" viewBox="0 0 10 9"><path d="M1.6 1.4L7 6.8" stroke="#2a4e8c" stroke-width="2.6" stroke-linecap="round"/><path d="M7 6.8L8.6 8.4" stroke="#9aa" stroke-width="1.6"/></svg>
<div class="t" style="left:51.20px;top:105.84px;font-size:7.39px;line-height:7.39px;color:#111;font-weight:normal;transform:scaleX(0.874);">Tasks</div>
<div class="a" style="left:1px;top:116px;width:159px;height:273px;background:#fff"></div>
<div class="a" style="left:2px;top:117px;width:156.3px;height:271px;background:linear-gradient(to bottom,#a9a9c3 0px,#9090b0 20px,#66668f 48px,#46467a 70px,#373769 92px,#333366 271px)"></div>
<div class="a" style="left:29.3px;top:125.1px;width:49.6px;height:18.6px;border:2px solid #f07b22;border-left-width:2.6px"></div>
<div class="a" style="left:32.5px;top:127px;width:45px;height:14px;background:#e1e1e1;border:1px solid #0078d7;box-shadow:inset 0 0 0 1px #cfe3f6"></div>
<div class="t" style="left:51.10px;top:131.11px;font-size:6.96px;line-height:6.96px;color:#111;font-weight:normal;transform:scaleX(0.905);">OK</div>
<div class="a" style="left:82.2px;top:127.5px;width:44px;height:13.3px;background:#e1e1e1;border:1px solid #b8b8b8"></div>
<div class="t" style="left:94.80px;top:131.11px;font-size:6.96px;line-height:6.96px;color:#111;font-weight:normal;transform:scaleX(0.854);">Cancel</div>
<div class="a" style="left:6.7px;top:151px;width:146.5px;height:213px;background:#d6dff7;border:1px solid #f2f4fb;border-radius:2px 2px 0 0"></div>
<div class="a" style="left:7.2px;top:151.5px;width:145.5px;height:14.5px;background:linear-gradient(to right,#ffffff 0%,#eef2fc 40%,#cfdaf5 100%);border-radius:2px 2px 0 0;border-bottom:1px solid #e6ecfa"></div>
<svg class="a" style="left:10.3px;top:154px" width="10.5" height="9" viewBox="0 0 10.5 9"><path d="M0.5 4.5L4.5 0.8L10 2.2V5.2L6 8.6L0.5 7.2Z" fill="#2a5aa8"/><path d="M0.5 4.5L4.5 0.8L10 2.2L6 5.6Z" fill="#dd1c1c"/><path d="M6 5.6V8.6L10 5.2V2.2Z" fill="#1d4088"/><path d="M0.5 4.5L6 5.6" stroke="#8a1010" stroke-width="0.4"/></svg>
<div class="t" style="left:21.40px;top:156.29px;font-size:7.10px;line-height:7.10px;color:#2352c4;font-weight:bold;transform:scaleX(0.982);">Chamfer parameters</div>
<svg class="a" style="left:141px;top:154px" width="10" height="10" viewBox="0 0 10 10"><circle cx="5" cy="5" r="4.5" fill="#fafbff" stroke="#c5cde6" stroke-width="0.7"/><path d="M2.6 4.6L5 2.4L7.4 4.6M2.6 7.2L5 5L7.4 7.2" fill="none" stroke="#2a62c8" stroke-width="1.1"/></svg>
<div class="a" style="left:40.4px;top:175px;width:18.2px;height:10.5px;background:#e1e1e1;border:1px solid #adadad"></div>
<div class="t" style="left:44.00px;top:176.66px;font-size:7.25px;line-height:7.25px;color:#111;font-weight:normal;transform:scaleX(0.853);">Add</div>
<div class="a" style="left:87.7px;top:175px;width:31.6px;height:10.8px;background:#cfcfcf;border:1px solid #bfbfbf"></div>
<div class="t" style="left:91.60px;top:176.66px;font-size:7.25px;line-height:7.25px;color:#9c9c9c;font-weight:normal;transform:scaleX(0.867);">Remove</div>
<div class="a" style="left:14.8px;top:190px;width:130px;height:114.3px;background:#fff;border:1px solid #e8ecf8;border-right-color:#aab2cc;border-bottom-color:#aab2cc;box-shadow:inset 1px 1px 0 #f2f4fb"></div>
<div class="t" style="left:18.10px;top:193.14px;font-size:7.39px;line-height:7.39px;color:#111;font-weight:normal;transform:scaleX(0.861);">Face4</div>
<div class="t" style="left:15.10px;top:311.39px;font-size:7.10px;line-height:7.10px;color:#111;font-weight:normal;transform:scaleX(0.908);">Type</div>
<div class="a" style="left:39.5px;top:310px;width:88px;height:10px;background:#e2e2e2;border:1px solid #c6c6c6"></div>
<div class="t" style="left:41.90px;top:311.49px;font-size:7.10px;line-height:7.10px;color:#111;font-weight:normal;transform:scaleX(0.899);">Equal distance</div>
<svg class="a" style="left:119px;top:313px" width="6" height="4" viewBox="0 0 6 4"><path d="M0.5 0.5L3 3L5.5 0.5" fill="none" stroke="#777" stroke-width="0.8"/></svg>
<div class="a" style="left:131.5px;top:308.5px;width:13px;height:12px;background:#d0d0d0;border:1px solid #c2c2c2"></div>
<svg class="a" style="left:133.5px;top:310px" width="9" height="9" viewBox="0 0 9 9"><path d="M2.5 0.5V8M6.5 0.5V8M0.5 3L2.5 0.5L4.5 3M4.5 5.5L6.5 8L8.5 5.5" fill="none" stroke="#9a9a9a" stroke-width="1.2"/></svg>
<div class="t" style="left:15.10px;top:329.59px;font-size:7.10px;line-height:7.10px;color:#111;font-weight:normal;transform:scaleX(0.847);">Size</div>
<div class="a" style="left:38px;top:326px;width:107.5px;height:13.5px;background:#fff;border:1px solid #b7bdd0"></div>
<div class="a" style="left:35.6px;top:323.3px;width:43.6px;height:20.5px;border:2px solid #f07b22"></div>
<div class="t" style="left:40.60px;top:330.53px;font-size:6.81px;line-height:6.81px;color:#111;font-weight:normal;transform:scaleX(1.004);">3 mm</div>
<svg class="a" style="left:126px;top:326.3px" width="8" height="7.5" viewBox="0 0 8 7.5"><circle cx="4" cy="3.8" r="3.3" fill="#9fb6dc" stroke="#5f7fb4" stroke-width="0.7"/><path d="M1 3.8H7M4 0.8C2.5 2.5 2.5 5 4 6.8M4 0.8C5.5 2.5 5.5 5 4 6.8" fill="none" stroke="#e6eefa" stroke-width="0.6"/></svg>
<div class="a" style="left:134px;top:326px;width:11px;height:13.5px;background:#f4f4f4;border:1px solid #b9b9b9"></div>
<svg class="a" style="left:136.5px;top:328px" width="6" height="10" viewBox="0 0 6 10"><path d="M0.5 3L3 0.5L5.5 3Z M0.5 6.5L3 9L5.5 6.5Z" fill="#111"/></svg>
<svg class="a" style="left:163px;top:88px" width="605" height="289" viewBox="163 88 605 289"><defs><linearGradient id="bg" gradientUnits="userSpaceOnUse" x1="0" y1="88" x2="0" y2="377"><stop offset="0" stop-color="#333366"/><stop offset="1" stop-color="#aaaac1"/></linearGradient><radialGradient id="cs" cx="0.5" cy="0.05" r="1.0" fx="0.55" fy="0.1"><stop offset="0" stop-color="#f2f2f2"/><stop offset="0.35" stop-color="#dedede"/><stop offset="0.7" stop-color="#b4b4b4"/><stop offset="1" stop-color="#8a8a8a"/></radialGradient><linearGradient id="bw" x1="0" y1="0" x2="1" y2="0"><stop offset="0" stop-color="#7a7a7a"/><stop offset="0.6" stop-color="#8e8e8e"/><stop offset="1" stop-color="#a8a8a8"/></linearGradient></defs><rect x="163" y="88" width="605" height="289" fill="url(#bg)"/><path d="M243.40,176.30 L286.90,145.80 L442.60,118.60 L498.40,146.50 L558.70,147.70 L599.20,214.50 L600.80,219.50 L488.10,298.20 L403.30,255.50 L367.50,198.50 L236.60,251.20Z" fill="#858585" stroke="#1a1a1a" stroke-width="1" stroke-linejoin="round"/><path d="M248.50,175.50 L287.20,146.60 L442.60,119.30 L498.40,147.20 L555.30,148.70 L558.70,147.70 L498.40,146.50 L442.60,118.60 L286.90,145.80 L243.40,176.30Z" fill="#3a3a3a"/><path d="M242.50,237.50 L248.50,175.50 L243.40,176.30 L237.40,245.30Z" fill="#808080"/><path d="M369.40,185.30 L242.50,237.50 L237.40,245.30 L367.50,194.10Z" fill="#d0d0d0"/><path d="M406.10,244.50 L369.40,185.30 L367.50,194.10 L402.90,250.80Z" fill="#a3a3a3"/><path d="M487.30,285.30 L406.10,244.50 L402.90,250.80 L487.30,293.10Z" fill="#d0d0d0"/><path d="M592.90,211.80 L487.30,285.30 L487.30,293.10 L599.20,214.50Z" fill="#d0d0d0"/><path d="M555.30,148.70 L592.90,211.80 L599.20,214.50 L558.70,147.70Z" fill="#7a7a7a"/><path d="M599.2,214.5 L487.3,293.1 L402.9,250.8 L367.5,194.1 L237.4,245.3" fill="none" stroke="#2a2a2a" stroke-width="0.7"/><path d="M487.3,293.1 L488.1,298.2 M402.9,250.8 L403.3,255.5" fill="none" stroke="#2a2a2a" stroke-width="0.6"/><path d="M248.50,175.50 L287.20,146.60 L442.60,119.30 L498.40,147.20 L555.30,148.70 L592.90,211.80 L487.30,285.30 L406.10,244.50 L369.40,185.30 L242.50,237.50Z" fill="#b0b0b0" stroke="#2a2a2a" stroke-width="0.7" stroke-linejoin="round"/><path d="M592.9,211.8 L599.2,214.5" stroke="#2a2a2a" stroke-width="0.6"/><path d="M487.3,285.3 L487.3,293.1" stroke="#2a2a2a" stroke-width="0.6"/><path d="M406.1,244.5 L402.9,250.8" stroke="#2a2a2a" stroke-width="0.6"/><path d="M369.4,185.3 L367.5,194.1" stroke="#2a2a2a" stroke-width="0.6"/><path d="M242.5,237.5 L237.4,245.3" stroke="#2a2a2a" stroke-width="0.6"/><path d="M237.4,245.3 L243.4,176.3 L286.9,145.8 L442.6,118.6 L498.4,146.5 L558.7,147.7 L599.2,214.5" fill="none" stroke="#151515" stroke-width="1.3" stroke-linejoin="round"/><path d="M600.8,219.5 L488.1,298.2 L403.3,255.5 L367.5,198.5 M367.5,194.1 L402.9,250.8 L403.3,255.5" fill="none" stroke="#151515" stroke-width="1.2" stroke-linejoin="round"/><path d="M366.9,194.6 L402.29999999999995,251.3" fill="none" stroke="#444" stroke-width="1.5"/><clipPath id="c1"><ellipse cx="293.9" cy="177" rx="13" ry="10.2"/></clipPath><ellipse cx="293.5" cy="173.3" rx="18.2" ry="14" fill="url(#cs)" stroke="#222" stroke-width="0.8"/><ellipse cx="293.9" cy="177" rx="13" ry="10.2" fill="url(#bw)" stroke="#222" stroke-width="0.8"/><ellipse cx="293.9" cy="181.8" rx="13" ry="10.2" fill="url(#bg)" stroke="#1a1a1a" stroke-width="0.9" clip-path="url(#c1)"/><clipPath id="c2"><ellipse cx="416" cy="155" rx="14.7" ry="11.6"/></clipPath><ellipse cx="415.3" cy="151.6" rx="20" ry="15.5" fill="url(#cs)" stroke="#222" stroke-width="0.8"/><ellipse cx="416" cy="155" rx="14.7" ry="11.6" fill="url(#bw)" stroke="#222" stroke-width="0.8"/><ellipse cx="416" cy="160.1" rx="14.7" ry="11.6" fill="url(#bg)" stroke="#1a1a1a" stroke-width="0.9" clip-path="url(#c2)"/><linearGradient id="cs2" x1="0" y1="0.62" x2="1" y2="0.38"><stop offset="0" stop-color="#6a6a6a"/><stop offset="0.28" stop-color="#8c8c8c"/><stop offset="0.5" stop-color="#c4c4c4"/><stop offset="1" stop-color="#cdcdcd"/></linearGradient><radialGradient id="cs4" cx="0.42" cy="0.06" r="0.35"><stop offset="0" stop-color="#f0f0f0" stop-opacity="1"/><stop offset="0.6" stop-color="#e0e0e0" stop-opacity="0.8"/><stop offset="1" stop-color="#d0d0d0" stop-opacity="0"/></radialGradient><path d="M547.56,201.91 L548.09,202.93 L548.53,203.98 L548.88,205.04 L549.15,206.12 L549.32,207.21 L549.39,208.31 L549.38,209.41 L549.27,210.51 L549.06,211.60 L548.77,212.67 L548.38,213.73 L547.91,214.77 L547.34,215.78 L546.70,216.76 L545.97,217.70 L545.16,218.61 L544.27,219.48 L543.32,220.29 L542.30,221.06 L541.21,221.78 L540.07,222.44 L538.87,223.04 L537.62,223.57 L536.33,224.05 L535.00,224.46 L533.64,224.80 L532.26,225.07 L530.85,225.27 L529.43,225.40 L528.01,225.46 L526.58,225.45 L525.15,225.37 L523.74,225.21 L522.34,224.98 L520.96,224.68 L519.61,224.32 L518.30,223.89 L517.02,223.39 L515.79,222.83 L514.61,222.21 L513.49,221.53 L512.43,220.79 L511.43,220.00 L510.50,219.17 L509.64,218.29 L508.86,217.37 L508.16,216.41 L507.54,215.42 L491.70,187.67 L491.17,186.65 L490.73,185.61 L490.38,184.54 L490.11,183.46 L489.94,182.37 L489.87,181.27 L489.88,180.17 L489.99,179.08 L490.20,177.99 L490.49,176.91 L490.88,175.85 L491.35,174.82 L491.92,173.81 L492.56,172.83 L493.29,171.88 L494.10,170.97 L494.99,170.11 L495.94,169.29 L496.96,168.52 L498.05,167.81 L499.19,167.15 L500.39,166.55 L501.64,166.01 L502.93,165.54 L504.26,165.13 L505.62,164.79 L507.00,164.51 L508.41,164.31 L509.83,164.18 L511.25,164.12 L512.68,164.13 L514.11,164.22 L515.52,164.38 L516.92,164.60 L518.30,164.90 L519.65,165.27 L520.96,165.70 L522.24,166.20 L523.47,166.76 L524.65,167.38 L525.77,168.06 L526.83,168.79 L527.83,169.58 L528.76,170.41 L529.62,171.29 L530.40,172.22 L531.10,173.17 L531.72,174.17Z" fill="url(#cs2)"/><path d="M547.56,201.91 L548.09,202.93 L548.53,203.98 L548.88,205.04 L549.15,206.12 L549.32,207.21 L549.39,208.31 L549.38,209.41 L549.27,210.51 L549.06,211.60 L548.77,212.67 L548.38,213.73 L547.91,214.77 L547.34,215.78 L546.70,216.76 L545.97,217.70 L545.16,218.61 L544.27,219.48 L543.32,220.29 L542.30,221.06 L541.21,221.78 L540.07,222.44 L538.87,223.04 L537.62,223.57 L536.33,224.05 L535.00,224.46 L533.64,224.80 L532.26,225.07 L530.85,225.27 L529.43,225.40 L528.01,225.46 L526.58,225.45 L525.15,225.37 L523.74,225.21 L522.34,224.98 L520.96,224.68 L519.61,224.32 L518.30,223.89 L517.02,223.39 L515.79,222.83 L514.61,222.21 L513.49,221.53 L512.43,220.79 L511.43,220.00 L510.50,219.17 L509.64,218.29 L508.86,217.37 L508.16,216.41 L507.54,215.42 L491.70,187.67 L491.17,186.65 L490.73,185.61 L490.38,184.54 L490.11,183.46 L489.94,182.37 L489.87,181.27 L489.88,180.17 L489.99,179.08 L490.20,177.99 L490.49,176.91 L490.88,175.85 L491.35,174.82 L491.92,173.81 L492.56,172.83 L493.29,171.88 L494.10,170.97 L494.99,170.11 L495.94,169.29 L496.96,168.52 L498.05,167.81 L499.19,167.15 L500.39,166.55 L501.64,166.01 L502.93,165.54 L504.26,165.13 L505.62,164.79 L507.00,164.51 L508.41,164.31 L509.83,164.18 L511.25,164.12 L512.68,164.13 L514.11,164.22 L515.52,164.38 L516.92,164.60 L518.30,164.90 L519.65,165.27 L520.96,165.70 L522.24,166.20 L523.47,166.76 L524.65,167.38 L525.77,168.06 L526.83,168.79 L527.83,169.58 L528.76,170.41 L529.62,171.29 L530.40,172.22 L531.10,173.17 L531.72,174.17Z" fill="url(#cs4)" stroke="#222" stroke-width="0.9"/><path d="M542.69,205.98 L543.12,206.81 L543.48,207.66 L543.77,208.53 L543.98,209.41 L544.12,210.30 L544.18,211.19 L544.17,212.09 L544.08,212.98 L543.91,213.87 L543.67,214.75 L543.36,215.61 L542.97,216.45 L542.51,217.28 L541.98,218.07 L541.39,218.84 L540.73,219.58 L540.01,220.29 L539.23,220.95 L538.40,221.58 L537.52,222.16 L536.58,222.70 L535.61,223.19 L534.59,223.63 L533.54,224.01 L532.46,224.35 L531.35,224.62 L530.22,224.85 L529.08,225.01 L527.92,225.12 L526.76,225.17 L525.59,225.15 L524.43,225.09 L523.28,224.96 L522.14,224.77 L521.02,224.53 L519.92,224.23 L518.85,223.88 L517.81,223.48 L516.81,223.02 L515.85,222.51 L514.93,221.96 L514.07,221.36 L513.25,220.72 L512.49,220.04 L511.80,219.32 L511.16,218.57 L510.59,217.79 L510.09,216.98 L494.97,190.51 L494.54,189.67 L494.18,188.82 L493.89,187.96 L493.68,187.07 L493.54,186.19 L493.48,185.29 L493.49,184.40 L493.58,183.50 L493.75,182.62 L493.99,181.74 L494.30,180.88 L494.69,180.03 L495.15,179.21 L495.68,178.41 L496.27,177.64 L496.93,176.90 L497.65,176.20 L498.43,175.53 L499.26,174.90 L500.14,174.32 L501.08,173.78 L502.05,173.30 L503.07,172.86 L504.12,172.47 L505.20,172.14 L506.31,171.86 L507.44,171.64 L508.58,171.47 L509.74,171.37 L510.90,171.32 L512.07,171.33 L513.23,171.40 L514.38,171.53 L515.52,171.71 L516.64,171.95 L517.74,172.25 L518.81,172.60 L519.85,173.01 L520.85,173.47 L521.81,173.97 L522.73,174.53 L523.59,175.12 L524.41,175.77 L525.17,176.45 L525.86,177.16 L526.50,177.91 L527.07,178.69 L527.57,179.50Z" fill="#7e7e7e" stroke="#2a2a2a" stroke-width="0.7"/><path d="M540.20,207.50 L540.59,208.26 L540.92,209.03 L541.18,209.82 L541.38,210.63 L541.50,211.44 L541.56,212.25 L541.55,213.06 L541.46,213.88 L541.31,214.68 L541.09,215.48 L540.81,216.27 L540.46,217.04 L540.04,217.79 L539.56,218.51 L539.02,219.21 L538.42,219.89 L537.76,220.53 L537.05,221.13 L536.30,221.70 L535.49,222.23 L534.64,222.72 L533.75,223.17 L532.83,223.57 L531.87,223.92 L530.89,224.22 L529.88,224.47 L528.85,224.68 L527.81,224.83 L526.76,224.92 L525.70,224.97 L524.64,224.96 L523.58,224.89 L522.54,224.78 L521.50,224.61 L520.48,224.39 L519.48,224.12 L518.50,223.80 L517.56,223.43 L516.65,223.01 L515.77,222.55 L514.94,222.05 L514.15,221.50 L513.41,220.92 L512.72,220.30 L512.08,219.65 L511.51,218.96 L510.99,218.25 L510.53,217.52 L497.26,194.28 L496.87,193.52 L496.54,192.75 L496.28,191.96 L496.08,191.16 L495.96,190.35 L495.90,189.53 L495.91,188.72 L496.00,187.91 L496.15,187.10 L496.37,186.30 L496.65,185.52 L497.00,184.75 L497.42,184.00 L497.90,183.27 L498.44,182.57 L499.04,181.90 L499.70,181.26 L500.41,180.65 L501.16,180.08 L501.97,179.55 L502.82,179.06 L503.71,178.62 L504.63,178.22 L505.59,177.87 L506.57,177.56 L507.58,177.31 L508.61,177.11 L509.65,176.96 L510.70,176.86 L511.76,176.82 L512.82,176.83 L513.88,176.89 L514.92,177.01 L515.96,177.18 L516.98,177.40 L517.98,177.67 L518.96,177.99 L519.90,178.36 L520.81,178.77 L521.69,179.23 L522.52,179.74 L523.31,180.28 L524.05,180.87 L524.74,181.48 L525.38,182.14 L525.95,182.82 L526.47,183.53 L526.93,184.27Z" fill="url(#bg)" stroke="#1a1a1a" stroke-width="1"/></svg>
<div class="a" style="left:163.5px;top:377px;width:604.5px;height:13px;background:#f0f0f0"></div>
<div class="a" style="left:165px;top:376px;width:67px;height:13.5px;background:#f3f3f3;border:1px solid #e0e0e0;border-top:none"></div>
<svg class="a" style="left:170.8px;top:378px" width="9.5" height="9.5" viewBox="0 0 11 11"><path d="M0.6 0.3h5.2v1.7h-3v2.3h2.6v1.7h-2.6v4.8h-2.2z" fill="#d01c1c"/><circle cx="7.6" cy="7.6" r="1.8" fill="none" stroke="#3868b8" stroke-width="1.5"/><circle cx="7.6" cy="7.6" r="2.7" fill="none" stroke="#3868b8" stroke-width="0.9" stroke-dasharray="0.9 0.75"/></svg>
<div class="t" style="left:182.80px;top:380.01px;font-size:6.96px;line-height:6.96px;color:#111;font-weight:normal;transform:scaleX(0.938);">Start page</div>
<div class="a" style="left:216.5px;top:379.3px;width:8.2px;height:8.4px;background:#d4d4d4;border:1px solid #c4c4c4"></div>
<svg class="a" style="left:217.5px;top:380.5px" width="6" height="6" viewBox="0 0 6 6"><path d="M1 1L5 5M5 1L1 5" stroke="#f4f4f4" stroke-width="1.1"/></svg>
<div class="a" style="left:231.3px;top:376px;width:82px;height:15px;background:#fff;border:1px solid #e2e2e2;border-top:none"></div>
<svg class="a" style="left:240.2px;top:379px" width="9.5" height="9.5" viewBox="0 0 11 11"><path d="M0.6 0.3h5.2v1.7h-3v2.3h2.6v1.7h-2.6v4.8h-2.2z" fill="#d01c1c"/><circle cx="7.6" cy="7.6" r="1.8" fill="none" stroke="#3868b8" stroke-width="1.5"/><circle cx="7.6" cy="7.6" r="2.7" fill="none" stroke="#3868b8" stroke-width="0.9" stroke-dasharray="0.9 0.75"/></svg>
<div class="t" style="left:252.20px;top:380.86px;font-size:7.25px;line-height:7.25px;color:#111;font-weight:normal;transform:scaleX(0.941);">Unnamed : 1*</div>
<div class="a" style="left:296.6px;top:380px;width:8.4px;height:8.8px;background:#e8683f;border:1px solid #d85a30"></div>
<svg class="a" style="left:297.8px;top:381.3px" width="6" height="6" viewBox="0 0 6 6"><path d="M1 1L5 5M5 1L1 5" stroke="#fff" stroke-width="1.2"/></svg>
<div class="a" style="left:0px;top:389px;width:768px;height:19px;background:#f0f0f0"></div>
<div class="a" style="left:642px;top:392px;width:1px;height:16px;background:#dcdcdc"></div>
<div class="a" style="left:692px;top:392px;width:1px;height:16px;background:#dcdcdc"></div>
<svg class="a" style="left:650.5px;top:395.5px" width="9" height="9" viewBox="0 0 9 9"><path d="M2 3.5C3 1 6 1 7.5 2.5M7 5.5C6 8 3 8 1.5 6.5" fill="none" stroke="#222" stroke-width="1.1"/><circle cx="7.5" cy="2.5" r="1.3" fill="#222"/><circle cx="1.5" cy="6.8" r="1.6" fill="#222"/></svg>
<div class="t" style="left:661.30px;top:397.49px;font-size:7.10px;line-height:7.10px;color:#333;font-weight:normal;transform:scaleX(1.019);">Gestur</div>
<svg class="a" style="left:684px;top:399px" width="5" height="3" viewBox="0 0 5 3"><path d="M0 0H5L2.5 3Z" fill="#222"/></svg>
<div class="t" style="left:695.10px;top:397.53px;font-size:6.81px;line-height:6.81px;color:#333;font-weight:normal;transform:scaleX(0.982);">355.67 mm x 169.37 mm</div>
<svg class="a" style="left:163px;top:88px" width="605" height="289" viewBox="163 88 605 289"><path d="M736,96 L745.5,96 L740.75,91.5Z" fill="#9797c0"/><path d="M736.5,138.7 L745,138.7 L740.75,143.8Z" fill="#9797c0"/><path d="M719,113 L719,122.5 L713.9,117.75Z" fill="#9797c0"/><path d="M761.7,113 L761.7,122.5 L766.8,117.75Z" fill="#9797c0"/><path d="M722.5,104.5 A24.5,24.5 0 0 1 733.5,95" fill="none" stroke="#9797c0" stroke-width="3.2"/><path d="M719,106 L725.5,100.5 L724.5,107Z" fill="#9797c0"/><path d="M747.5,95 A24.5,24.5 0 0 1 758.5,104.5" fill="none" stroke="#9797c0" stroke-width="3.2"/><path d="M762,106 L755.5,100.5 L756.5,107Z" fill="#9797c0"/><g transform="rotate(-9 740 117)"><ellipse cx="753.5" cy="118" rx="2.4" ry="3.4" fill="#e2e2ec"/><ellipse cx="727.5" cy="120.5" rx="2.2" ry="3.2" fill="#d2d2de"/><rect x="728.5" y="115" width="23" height="7" fill="#b4b4c8"/><rect x="728" y="104.5" width="23.5" height="12" rx="3" fill="#dedee8" stroke="#c4c4d6" stroke-width="0.6"/><rect x="729" y="120.5" width="22.5" height="11" rx="3" fill="#d6d6e2" stroke="#c4c4d6" stroke-width="0.6"/><text x="740" y="112.9" font-family="Liberation Sans" font-weight="bold" font-size="6.2" text-anchor="middle" fill="#000" transform="rotate(180 740 110.7)">FRONT</text><text x="740.5" y="128.2" font-family="Liberation Sans" font-weight="bold" font-size="5.4" text-anchor="middle" fill="#000" transform="rotate(180 740.5 126.3)">TOP</text></g><path d="M725.5,103 L743,99" stroke="#d01818" stroke-width="1"/><path d="M725.5,103 V116" stroke="#18c018" stroke-width="1"/><path d="M726.5,104 L729,113" stroke="#4444ff" stroke-width="0.8"/><path d="M724,120 L726,122 L728,119" fill="none" stroke="#18a018" stroke-width="0.6"/><path d="M750,135.5 L752,134.2 H756.5 V139.8 L754.5,141 H750Z" fill="#9d9dbb"/><path d="M760,136.5 H764 L762,138.5Z" fill="#8585a5"/><path d="M755,362.5 L765.5,359.5" stroke="#c83030" stroke-width="1.2"/><path d="M755,362.5 L756.5,371" stroke="#1fa81f" stroke-width="1.3"/><path d="M755,362.5 V367" stroke="#2a2ad0" stroke-width="0.9"/><path d="M765.5,357.5 L768,360 M768,357.5 L765.5,360" stroke="#333" stroke-width="0.6"/><path d="M757.5,368.5 L758.6,370 L759.7,368.5 M758.6,370 V372" fill="none" stroke="#333" stroke-width="0.6"/><path d="M757,364.2 H758.6 L757,366.2 H758.6" fill="none" stroke="#333" stroke-width="0.5"/></svg>
</body></html>
